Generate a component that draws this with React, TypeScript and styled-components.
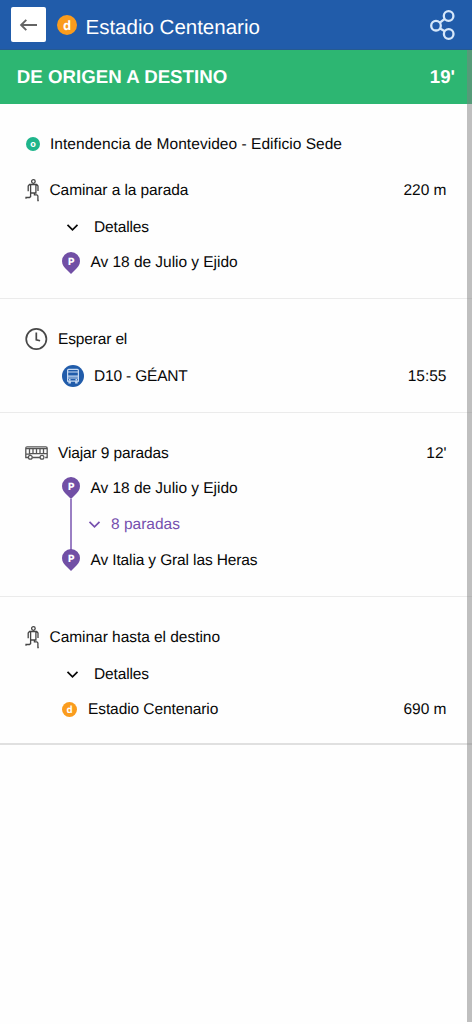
import React from 'react';
import styled, { createGlobalStyle } from 'styled-components';

const GlobalStyle = createGlobalStyle`
  body { margin: 0; background: #fefefe; }
`;

const Page = styled.div`
  position: relative;
  width: 472px;
  height: 1024px;
  overflow: hidden;
  background: #fefefe;
  color: #080808;
  font-family: "Liberation Sans", Arial, sans-serif;
  font-size: 15.5px;
  text-rendering: geometricPrecision;
`;

const TopBar = styled.header`
  display: flex;
  align-items: center;
  box-sizing: border-box;
  height: 50px;
  padding: 0 17px 0 11px;
  background: #215caa;
  border-bottom: 1px solid #265a91;
`;

const BackButton = styled.button`
  display: grid;
  place-items: center;
  width: 35px;
  height: 35px;
  margin: 0 11px 0 0;
  padding: 0;
  border: 0;
  border-radius: 2px;
  background: #fff;
`;

const Title = styled.h1`
  flex: 1;
  margin: 6px 0 0 8.5px;
  color: #fff;
  font-size: 20.5px;
  font-weight: 400;
  line-height: 24px;
  white-space: nowrap;
`;

const Summary = styled.div`
  display: flex;
  justify-content: space-between;
  align-items: center;
  box-sizing: border-box;
  height: 54px;
  padding: 0 17px 0 16.8px;
  background: #2db672;
  color: #fff;
  font-size: 18.7px;
  font-weight: 700;
`;

const Step = styled.section<{ $bottom: number; $last?: boolean }>`
  padding: 17px 25.5px ${p => p.$bottom}px 25px;
  border-bottom: ${p => (p.$last ? '2px solid #e0e0e0' : '1px solid #ebebeb')};
`;

const Row = styled.div<{ $height: number; $indent?: number; $gap?: number; $tone?: string }>`
  display: flex;
  align-items: center;
  height: ${p => p.$height}px;
  padding-left: ${p => p.$indent ?? 0}px;
  gap: ${p => p.$gap ?? 10}px;
  color: ${p => p.$tone ?? 'inherit'};
`;

const Label = styled.span<{ $track?: number }>`
  flex: 1;
  padding-top: 1px;
  white-space: nowrap;
  line-height: 20px;
  letter-spacing: ${p => p.$track ?? 0}px;
`;

const Value = styled.span`
  padding-top: 1px;
  line-height: 20px;
`;

const Connector = styled.span`
  flex: none;
  width: 2px;
  height: 52px;
  margin-right: 6px;
  background: #9a7fc3;
`;

const ScrollBar = styled.div`
  position: absolute;
  top: 50px;
  right: 0;
  width: 5px;
  height: 972px;
  background: rgba(128, 128, 128, 0.5);
`;

const Icon = styled.svg`
  display: block;
  flex: none;
  overflow: visible;
`;

const Dot = ({ letter, color, size }: { letter: string; color: string; size: number }) => (
  <Icon width={size} height={size} viewBox="0 0 20 20">
    <circle cx="10" cy="10" r="10" fill={color} />
    <text x="10" y={letter === 'o' ? 13.8 : 14.6} textAnchor="middle" fill="#fff" fontFamily={letter === 'o' ? 'Inter' : 'Open Sans'} fontWeight="700" fontSize="13">{letter}</text>
  </Icon>
);

const Pin = () => (
  <Icon width="18" height="22" viewBox="0 0 18 22">
    <path d="M9 0a9 9 0 0 1 9 9c0 4-2.200 6.400-5 9L9 22l-4-4C2.200 15.400 0 13 0 9a9 9 0 0 1 9-9z" fill="#714fa5" />
    <text x="9.200" y="12.800" textAnchor="middle" fill="#fff" fontFamily="Inter" fontWeight="800" fontSize="10">P</text>
  </Icon>
);

const Chevron = () => (
  <Icon width="11" height="7" viewBox="0 0 11 7" fill="none" stroke="currentColor" strokeWidth="1.700">
    <path d="M.5.8l5 5 5-5" />
  </Icon>
);

const Walker = () => (
  <Icon width="14" height="22" viewBox="0 0 14 22" fill="none" stroke="#454545" strokeWidth="1.300">
    <circle cx="8.400" cy="2.500" r="1.800" />
    <path d="M5.600 14V5.500h5.300V14zM5.600 5.500H4.500L3.200 7v5.200M10.900 5.500h.8L13 7v5M5.600 14v3.600L4.500 18.500H1v1.300M9.400 14v1.900h2.500l1 1V21.500h.9" />
  </Icon>
);

const Clock = () => (
  <Icon width="22" height="22" viewBox="0 0 22 22" fill="none" stroke="#484848" strokeWidth="1.700">
    <circle cx="11.300" cy="11" r="10.100" />
    <path d="M11.300 4.500v7.300l3.800 1" />
  </Icon>
);

const BusSide = () => (
  <Icon width="23" height="14" viewBox="0 0 23 14" fill="none" stroke="#555" strokeWidth="1.300">
    <path d="M3.200 11.500H.8V2.200Q.8.800 2.200.8h18.600q1.400 0 1.400 1.400v9.300h-2M6.800 11.500h9.400M.8 2.700h21.400M.8 8.200h4L6 7.600h16M4.500 2.700v5.200M8 2.700v4.900M11.500 2.700v4.900M15 2.700v4.900M18.500 2.700v4.900" />
    <circle cx="5.300" cy="11.300" r="1.900" fill="#fefefe" />
    <circle cx="17" cy="11.300" r="1.900" fill="#fefefe" />
  </Icon>
);

const BusFront = () => (
  <Icon width="22" height="22" viewBox="0 0 22 22" fill="none" stroke="#c8daf2" strokeWidth="1.200">
    <circle cx="11" cy="11" r="11" fill="#215caa" stroke="none" />
    <path d="M5.600 16.200V5.400q0-1 1-1h8.800q1 0 1 1v10.800zM5.600 7h10.800M5.600 11.200h10.800M5.600 13h10.800M7 14.600h1.500M13.500 14.600H15M7 16.200V18h1.300v-1.800M13.700 16.200V18H15v-1.800" />
  </Icon>
);

const Share = () => (
  <Icon width="25" height="30" viewBox="0 0 25 30" fill="none" stroke="#d6e7fa" strokeWidth="2.300">
    <circle cx="6" cy="15.700" r="4.800" />
    <circle cx="18.600" cy="6" r="4.800" />
    <circle cx="18.700" cy="24" r="4.800" />
    <path d="M9.900 12.600l4.800-3.700M10 18.500l4.800 2.700" />
  </Icon>
);

const BackArrow = () => (
  <Icon width="17" height="12" viewBox="0 0 17 12" fill="none" stroke="#646464" strokeWidth="1.900">
    <path d="M17 6H1M6.300.8L1.100 6l5.200 5.200" />
  </Icon>
);

export default function App() {
  return (
    <Page>
      <GlobalStyle />
      <TopBar>
        <BackButton aria-label="Volver"><BackArrow /></BackButton>
        <Dot letter="d" color="#fa9c1d" size={20} />
        <Title>Estadio Centenario</Title>
        <Share />
      </TopBar>
      <Summary><span>DE ORIGEN A DESTINO</span><span>19'</span></Summary>
      <Step $bottom={14}>
        <Row $height={46} $indent={0.5} $gap={10.5}>
          <Dot letter="o" color="#1fb58b" size={14} />
          <Label $track={0.04}>Intendencia de Montevideo - Edificio Sede</Label>
        </Row>
        <Row $height={46} $gap={10.5}><Walker /><Label $track={-0.09}>Caminar a la parada</Label><Value>220 m</Value></Row>
        <Row $height={28} $indent={42} $gap={16}><Chevron /><Label $track={-0.15}>Detalles</Label></Row>
        <Row $height={43} $indent={37} $gap={10.5}><Pin /><Label $track={-0.04}>Av 18 de Julio y Ejido</Label></Row>
      </Step>
      <Step $bottom={22}>
        <Row $height={46} $gap={11}><Clock /><Label $track={-0.15}>Esperar el</Label></Row>
        <Row $height={28} $indent={37}><BusFront /><Label $track={-0.18}>D10 - GÉANT</Label><Value>15:55</Value></Row>
      </Step>
      <Step $bottom={25}>
        <Row $height={46}><BusSide /><Label $track={-0.13}>Viajar 9 paradas</Label><Value>12'</Value></Row>
        <Row $height={24} $indent={37} $gap={10.5}><Pin /><Label $track={-0.04}>Av 18 de Julio y Ejido</Label></Row>
        <Row $height={49} $indent={45} $gap={11} $tone="#7650ae"><Connector /><Chevron /><Label>8 paradas</Label></Row>
        <Row $height={22} $indent={37} $gap={10.5}><Pin /><Label $track={-0.13}>Av Italia y Gral las Heras</Label></Row>
      </Step>
      <Step $bottom={13} $last>
        <Row $height={46} $gap={10.5}><Walker /><Label $track={-0.04}>Caminar hasta el destino</Label></Row>
        <Row $height={28} $indent={42} $gap={16}><Chevron /><Label $track={-0.15}>Detalles</Label></Row>
        <Row $height={42} $indent={37} $gap={11}><Dot letter="d" color="#fa9c1d" size={15} /><Label $track={-0.09}>Estadio Centenario</Label><Value>690 m</Value></Row>
      </Step>
      <ScrollBar />
    </Page>
  );
}
